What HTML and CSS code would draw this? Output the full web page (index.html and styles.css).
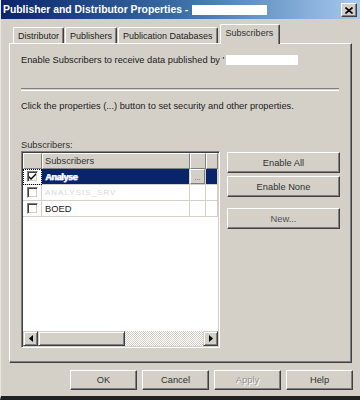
FILE: index.html
```html
<!DOCTYPE html>
<html lang="en">
<head>
    <meta charset="UTF-8">
    <title>Publisher and Distributor Properties</title>
    <link rel="stylesheet" href="styles.css">
</head>
<body>
    <div class="window">
        <div class="titlebar">
            <span class="title">Publisher and Distributor Properties - </span>
            <span class="title-blank"></span>
            <span class="close-btn">
                <svg width="8" height="7" viewBox="0 0 8 7"><path d="M0.5 0.5 L7.5 6.5 M7.5 0.5 L0.5 6.5" stroke="#000" stroke-width="1.6"/></svg>
            </span>
        </div>

        <div class="tabs">
            <div class="tab">Distributor</div>
            <div class="tab">Publishers</div>
            <div class="tab">Publication Databases</div>
            <div class="tab active">Subscribers</div>
        </div>

        <div class="panel">
            <div class="intro">Enable Subscribers to receive data published by '<span class="blank"></span></div>
            <div class="separator"></div>
            <div class="hint">Click the properties (...) button to set security and other properties.</div>
            <div class="list-label">Subscribers:</div>

            <div class="list-area">
                <div class="grid">
                    <div class="grid-rows">
                        <div class="cell head"></div>
                        <div class="cell head name">Subscribers</div>
                        <div class="cell head"></div>
                        <div class="cell head"></div>

                        <div class="cell check focus"><span class="checkbox checked"><svg width="9" height="9" viewBox="0 0 9 9"><path d="M1 4 L3 6 L8 1 L8 3 L3 8 L1 6 Z" fill="#000"/></svg></span></div>
                        <div class="cell name selected"><span class="smudge">Analyse</span></div>
                        <div class="cell dots selected"><span class="dots-btn">...</span></div>
                        <div class="cell selected"></div>

                        <div class="cell check"><span class="checkbox"></span></div>
                        <div class="cell name"><span class="faded">ANALYSIS_SRV</span></div>
                        <div class="cell"></div>
                        <div class="cell"></div>

                        <div class="cell check"><span class="checkbox"></span></div>
                        <div class="cell name">BOED</div>
                        <div class="cell"></div>
                        <div class="cell"></div>
                    </div>
                    <div class="grid-fill"></div>
                    <div class="hscroll">
                        <span class="arrow-btn"><svg width="4" height="7" viewBox="0 0 4 7"><path d="M4 0 L0 3.5 L4 7 Z" fill="#000"/></svg></span>
                        <span class="thumb"></span>
                        <span class="track"></span>
                        <span class="arrow-btn"><svg width="4" height="7" viewBox="0 0 4 7"><path d="M0 0 L4 3.5 L0 7 Z" fill="#000"/></svg></span>
                    </div>
                </div>

                <div class="side-buttons">
                    <button class="win-btn">Enable All</button>
                    <button class="win-btn">Enable None</button>
                    <button class="win-btn new-btn">New...</button>
                </div>
            </div>
        </div>

        <div class="footer">
            <button class="win-btn">OK</button>
            <button class="win-btn">Cancel</button>
            <button class="win-btn disabled">Apply</button>
            <button class="win-btn">Help</button>
        </div>
    </div>
</body>
</html>
```

FILE: styles.css
```css
body {
    margin: 0;
    background-color: #d4d0c8;
    font-family: 'Liberation Sans', Arial, sans-serif;
    font-size: 9.3px;
    color: #000;
}
.window {
    width: 360px;
    height: 400px;
    box-sizing: border-box;
    background-color: #d4d0c8;
    border-left: 1px solid #e8e6e0;
    border-bottom: 4px solid #202020;
    display: flex;
    flex-direction: column;
}
.titlebar {
    height: 19px;
    display: flex;
    align-items: center;
    padding: 0 3px 0 2px;
    background: linear-gradient(to right, #0a246a 0%, #3a6ea5 50%, #a6caf0 100%);
}
.title {
    color: #fff;
    font-weight: bold;
    font-size: 10.4px;
    white-space: pre;
}
.title-blank {
    width: 75px;
    height: 10px;
    margin-left: 1px;
    background-color: #fff;
}
.close-btn {
    margin-left: auto;
    margin-top: 1px;
    width: 14px;
    height: 12px;
    background-color: #d4d0c8;
    border: 1px solid;
    border-color: #fff #404040 #404040 #fff;
    box-shadow: inset -1px -1px #808080;
    display: flex;
    justify-content: center;
    align-items: center;
}
.tabs {
    display: flex;
    align-items: flex-end;
    height: 19px;
    margin-top: 5px;
    padding-left: 12px;
    position: relative;
    z-index: 1;
}
.tab {
    height: 16px;
    box-sizing: border-box;
    padding: 2px 4px 0;
    margin-right: 1px;
    border-top: 1px solid #fff;
    border-left: 1px solid #fff;
    border-right: 1px solid #404040;
    box-shadow: inset -1px 0 #808080;
    border-radius: 2px 2px 0 0;
    color: #202020;
    font-size: 9px;
    line-height: 12px;
}
.tab.active {
    height: 20px;
    margin-left: 1px;
    margin-bottom: -1px;
    padding-top: 3px;
    padding-left: 5px;
    padding-right: 6px;
    background-color: #d4d0c8;
    color: #303030;
    line-height: 11px;
}
.panel {
    margin: 0 8px;
    height: 320px;
    box-sizing: border-box;
    border: 1px solid;
    border-color: #fff #404040 #404040 #fff;
    box-shadow: inset -1px -1px #808080;
    padding: 10px 11px 0 11px;
}
.intro {
    display: flex;
    align-items: center;
    line-height: 12px;
    color: #202020;
}
.blank {
    width: 72px;
    height: 10px;
    margin-left: 2px;
    background-color: #fff;
}
.separator {
    margin: 22px 1px 0 0;
    height: 1px;
    border-top: 1px solid #808080;
    border-bottom: 1px solid #fff;
}
.hint {
    margin-top: 9px;
    line-height: 12px;
    color: #202020;
}
.list-label {
    margin-top: 27px;
    line-height: 12px;
    color: #303030;
}
.list-area {
    display: flex;
    margin-top: 0;
}
.grid {
    width: 200px;
    height: 197px;
    box-sizing: border-box;
    border: 1px solid;
    border-color: #808080 #fff #fff #808080;
    box-shadow: inset 1px 1px #404040, inset -1px -1px #d4d0c8;
    padding: 1px;
    background-color: #fff;
    display: flex;
    flex-direction: column;
}
.grid-rows {
    display: grid;
    grid-template-columns: 19px 148px 16px 1fr;
    grid-auto-rows: 16px;
}
.cell {
    box-sizing: border-box;
    border-right: 1px solid #d4d0c8;
    border-bottom: 1px solid #d4d0c8;
    display: flex;
    align-items: center;
    line-height: 12px;
    color: #202020;
}
.cell.head {
    background-color: #d4d0c8;
    border-top: 1px solid #fff;
    border-left: 1px solid #fff;
    border-right: 1px solid #808080;
    border-bottom: 1px solid #808080;
    color: #303030;
}
.cell.name {
    padding-left: 3px;
}
.cell.head.name {
    padding-left: 2px;
}
.cell.check {
    justify-content: center;
}
.cell.focus {
    outline: 1px dotted #000;
    outline-offset: -1px;
}
.cell.selected {
    background-color: #0a246a;
    color: #fff;
}
.smudge {
    font-weight: bold;
    color: #fff;
    letter-spacing: -0.5px;
    text-shadow: 1px 0 #c8d0e8, 0 1px #8090c0;
}
.faded {
    color: #d8d8d8;
    font-size: 8px;
    letter-spacing: 1px;
}
.checkbox {
    width: 11px;
    height: 11px;
    box-sizing: border-box;
    border: 1px solid;
    border-color: #808080 #fff #fff #808080;
    box-shadow: inset 1px 1px #404040, inset -1px -1px #d4d0c8;
    background-color: #fff;
    display: flex;
    justify-content: center;
    align-items: center;
}
.cell.dots {
    background-color: #0a246a;
}
.dots-btn {
    width: 100%;
    height: 100%;
    box-sizing: border-box;
    background-color: #d4d0c8;
    border: 1px solid;
    border-color: #fff #808080 #808080 #fff;
    color: #606060;
    font-size: 8px;
    display: flex;
    justify-content: center;
    align-items: flex-end;
    line-height: 10px;
}
.grid-fill {
    flex-grow: 1;
}
.hscroll {
    height: 15px;
    display: flex;
}
.arrow-btn {
    width: 15px;
    box-sizing: border-box;
    background-color: #d4d0c8;
    border: 1px solid;
    border-color: #d4d0c8 #404040 #404040 #d4d0c8;
    box-shadow: inset 1px 1px #fff, inset -1px -1px #808080;
    display: flex;
    justify-content: center;
    align-items: center;
}
.thumb {
    width: 87px;
    box-sizing: border-box;
    background-color: #d4d0c8;
    border: 1px solid;
    border-color: #d4d0c8 #404040 #404040 #d4d0c8;
    box-shadow: inset 1px 1px #fff, inset -1px -1px #808080;
}
.track {
    flex-grow: 1;
    background-color: #d4d0c8;
    background-image: conic-gradient(#fff 25%, #d4d0c8 0 50%, #fff 0 75%, #d4d0c8 0);
    background-size: 2px 2px;
}
.side-buttons {
    display: flex;
    flex-direction: column;
    margin-left: 7px;
    margin-top: 1px;
}
.win-btn {
    font-family: inherit;
    font-size: 9.3px;
    color: #303030;
    background-color: #d4d0c8;
    border: 1px solid;
    border-color: #fff #404040 #404040 #fff;
    box-shadow: inset -1px -1px #808080;
    padding: 0;
    margin: 0;
}
.side-buttons .win-btn {
    width: 113px;
    height: 21px;
    margin-bottom: 3px;
}
.side-buttons .new-btn {
    margin-top: 8px;
    color: #505050;
}
.footer {
    display: flex;
    justify-content: flex-end;
    gap: 5px;
    margin-top: 7px;
    padding-right: 7px;
}
.footer .win-btn {
    width: 67px;
    height: 20px;
}
.win-btn.disabled {
    color: #909090;
    text-shadow: 1px 1px #fff;
}
```
